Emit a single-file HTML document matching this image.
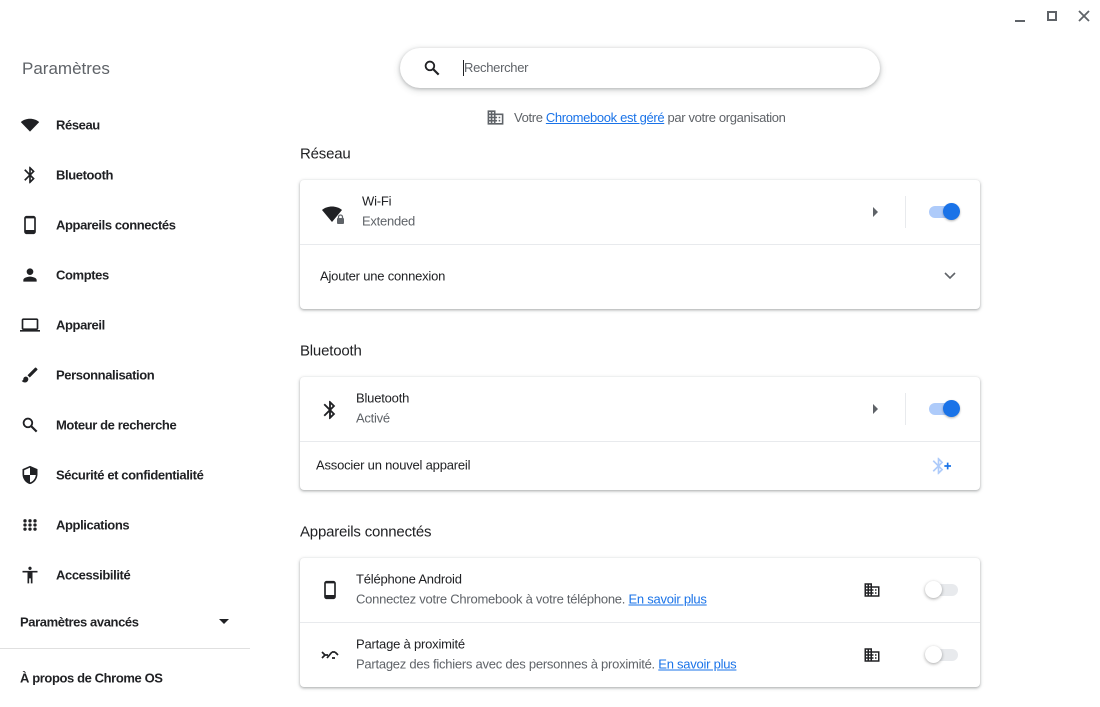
<!DOCTYPE html>
<html><head><meta charset="utf-8"><style>
*{margin:0;padding:0;box-sizing:border-box}
body{width:1100px;height:707px;background:#fff;font-family:"Liberation Sans",Arial,sans-serif;color:#202124;position:relative;overflow:hidden}
.a{position:absolute}
.nav{position:absolute;left:56px;font-size:13px;font-weight:bold;color:#202124;transform:translateY(-50%);letter-spacing:-0.4px}
.ic{position:absolute;width:20px;height:20px;transform:translate(-50%,-50%)}
.card{position:absolute;left:300px;width:680px;background:#fff;border-radius:4px;box-shadow:0 1px 2px rgba(60,64,67,.3),0 1px 3px 1px rgba(60,64,67,.15)}
.h{position:absolute;left:300px;font-size:15px;color:#202124;transform:translateY(-50%);letter-spacing:-0.2px}
.t{position:absolute;font-size:13px;color:#202124;transform:translateY(-50%);letter-spacing:-0.2px}
.s{position:absolute;font-size:13px;color:#5f6368;transform:translateY(-50%);letter-spacing:-0.25px}
.sep{position:absolute;left:0;right:0;height:1px;background:#e8eaed}
a{color:#1a73e8;text-decoration:underline}
.ton .tr{position:absolute;width:30px;height:12px;border-radius:6px;background:#aecbfa}
.ton .kn{position:absolute;width:17px;height:17px;border-radius:50%;background:#1a73e8;box-shadow:0 1px 2px rgba(0,0,0,.3)}
.toff .tr{position:absolute;width:30px;height:12px;border-radius:6px;background:#e8eaed}
.toff .kn{position:absolute;width:17px;height:17px;border-radius:50%;background:#fff;box-shadow:0 1px 3px rgba(0,0,0,.35)}
</style></head><body>

<div class="a" style="left:1015px;top:20px;width:10px;height:2px;background:#5f6368"></div>
<div class="a" style="left:1047px;top:11px;width:10px;height:10px;border:2px solid #5f6368"></div>
<svg class="a" style="left:1078px;top:10px" width="12" height="12" viewBox="0 0 12 12"><path d="M1 1L11 11M11 1L1 11" stroke="#5f6368" stroke-width="1.8"/></svg>

<div class="a" style="left:22px;top:59px;font-size:17px;color:#5f6368">Paramètres</div>

<svg class="ic" style="left:30px;top:125px" viewBox="0 0 24 24"><path d="M12 20L1 8.5C4 5.8 7.8 4.5 12 4.5S20 5.8 23 8.5z" fill="#202124"/></svg>
<div class="nav" style="top:125px">Réseau</div>
<svg class="ic" style="left:30px;top:175px" viewBox="0 0 24 24"><path d="M17.7 7.7L12 2h-1v7.6L6.4 5 5 6.4 10.6 12 5 17.6 6.4 19l4.6-4.6V22h1l5.7-5.7-4.3-4.3 4.3-4.3zM13 5.8l1.9 1.9L13 9.6V5.8zm1.9 10.5L13 18.2v-3.8l1.9 1.9z" fill="#202124"/></svg>
<div class="nav" style="top:175px">Bluetooth</div>
<svg class="ic" style="left:30px;top:225px" viewBox="0 0 24 24"><path d="M16 1H8C6.3 1 5 2.3 5 4v16c0 1.7 1.3 3 3 3h8c1.7 0 3-1.300 3-3V4c0-1.7-1.3-3-3-3zm1 17H7V4h10v14z" fill="#202124"/></svg>
<div class="nav" style="top:225px">Appareils connectés</div>
<svg class="ic" style="left:30px;top:275px" viewBox="0 0 24 24"><path d="M12 12c2.2 0 4-1.8 4-4s-1.8-4-4-4-4 1.8-4 4 1.8 4 4 4zm0 2c-2.7 0-8 1.3-8 4v2h16v-2c0-2.7-5.3-4-8-4z" fill="#202124"/></svg>
<div class="nav" style="top:275px">Comptes</div>
<svg class="ic" style="left:30px;top:325px" viewBox="0 0 24 24"><path d="M20 18c1.1 0 2-.9 2-2V6c0-1.1-.9-2-2-2H4c-1.1 0-2 .9-2 2v10c0 1.1.9 2 2 2H0v2h24v-2h-4zM4 6h16v10H4V6z" fill="#202124"/></svg>
<div class="nav" style="top:325px">Appareil</div>
<svg class="ic" style="left:30px;top:375px" viewBox="0 0 24 24"><path d="M7 14c-1.7 0-3 1.3-3 3 0 1.3-1.2 2-2 2 .9 1.2 2.5 2 4 2 2.2 0 4-1.8 4-4 0-1.7-1.3-3-3-3zm13.7-9.4l-1.3-1.3a1 1 0 00-1.4 0L9 12.3 11.7 15l9-9a1 1 0 000-1.4z" fill="#202124"/></svg>
<div class="nav" style="top:375px">Personnalisation</div>
<svg class="ic" style="left:30px;top:425px" viewBox="0 0 24 24"><circle cx="9.5" cy="9.5" r="5.2" fill="none" stroke="#202124" stroke-width="2.2"/><path d="M13.5 13.5L20 20" stroke="#202124" stroke-width="2.6"/></svg>
<div class="nav" style="top:425px">Moteur de recherche</div>
<svg class="ic" style="left:30px;top:475px" viewBox="0 0 24 24"><path d="M12 1L3 5v6c0 5.5 3.8 10.7 9 12 5.2-1.3 9-6.5 9-12V5l-9-4zm0 11h7c-.5 4.1-3.3 7.8-7 8.9V12H5V6.3l7-3.1V12z" fill="#202124"/></svg>
<div class="nav" style="top:475px">Sécurité et confidentialité</div>
<svg class="ic" style="left:30px;top:525px" viewBox="0 0 24 24"><g fill="#202124"><circle cx="6" cy="7" r="2"/><circle cx="12" cy="7" r="2"/><circle cx="18" cy="7" r="2"/><circle cx="6" cy="12" r="2"/><circle cx="12" cy="12" r="2"/><circle cx="18" cy="12" r="2"/><circle cx="6" cy="17" r="2"/><circle cx="12" cy="17" r="2"/><circle cx="18" cy="17" r="2"/></g></svg>
<div class="nav" style="top:525px">Applications</div>
<svg class="ic" style="left:30px;top:575px" viewBox="0 0 24 24"><path d="M12 2c1.1 0 2 .9 2 2s-.9 2-2 2-2-.9-2-2 .9-2 2-2zm9 7h-6v13h-2v-6h-2v6H9V9H3V7h18v2z" fill="#202124"/></svg>
<div class="nav" style="top:575px">Accessibilité</div>

<div class="nav" style="left:20px;top:622px">Paramètres avancés</div>
<svg class="a" style="left:219px;top:619px" width="10" height="6" viewBox="0 0 10 6"><path d="M0 0h10L5 5z" fill="#202124"/></svg>
<div class="a" style="left:0;top:648px;width:250px;height:1px;background:#e0e0e0"></div>
<div class="nav" style="left:20px;top:678px">À propos de Chrome OS</div>

<div class="a" style="left:400px;top:48px;width:480px;height:40px;border-radius:20px;background:#fff;box-shadow:0 1px 3px rgba(60,64,67,.3),0 2px 6px 2px rgba(60,64,67,.12)"></div>
<svg class="a" style="left:422px;top:58px" width="20" height="20" viewBox="0 0 24 24"><circle cx="9.5" cy="9.5" r="5.2" fill="none" stroke="#202124" stroke-width="2.2"/><path d="M13.5 13.5L20 20" stroke="#202124" stroke-width="2.6"/></svg>
<div class="a" style="left:463px;top:60px;width:1px;height:16px;background:#202124"></div>
<div class="a" style="left:464px;top:60px;font-size:13px;color:#5f6368;letter-spacing:-0.3px">Rechercher</div>

<svg class="a" style="left:486px;top:108px" width="19" height="19" viewBox="0 0 24 24"><path d="M12 7V3H2v18h20V7H12zM6 19H4v-2h2v2zm0-4H4v-2h2v2zm0-4H4V9h2v2zm0-4H4V5h2v2zm4 12H8v-2h2v2zm0-4H8v-2h2v2zm0-4H8V9h2v2zm0-4H8V5h2v2zm10 12h-8v-2h2v-2h-2v-2h2v-2h-2V9h8v10zm-2-8h-2v2h2v-2zm0 4h-2v2h2v-2z" fill="#5f6368"/></svg>
<div class="a" style="left:514px;top:110px;font-size:13px;color:#5f6368;letter-spacing:-0.35px">Votre <a>Chromebook est géré</a> par votre organisation</div>

<div class="h" style="top:154px">Réseau</div>
<div class="card" style="top:180px;height:129px">
  <svg class="a" style="left:21px;top:23px" width="24" height="22" viewBox="0 0 24 22"><path d="M11 19L1 7C4 4.5 7.5 3.5 11 3.5S18 4.5 21 7z" fill="#202124"/><rect x="16" y="15" width="7" height="6" rx="1" fill="#5f6368"/><path d="M17.5 15.5v-1.5a2 2 0 014 0v1.5" stroke="#5f6368" fill="none" stroke-width="1.3"/></svg>
  <div class="t" style="left:62px;top:21px">Wi-Fi</div>
  <div class="s" style="left:62px;top:41px">Extended</div>
  <svg class="a" style="left:573px;top:27px" width="5" height="10" viewBox="0 0 5 10"><path d="M0 0l5 5-5 5z" fill="#5f6368"/></svg>
  <div class="a" style="left:605px;top:16px;width:1px;height:32px;background:#e8eaed"></div>
  <div class="ton"><div class="tr" style="left:629px;top:26px"></div><div class="kn" style="left:643px;top:23px"></div></div>
  <div class="sep" style="top:64px"></div>
  <div class="t" style="left:20px;top:96px">Ajouter une connexion</div>
  <svg class="a" style="left:644px;top:92px" width="12" height="8" viewBox="0 0 12 8"><path d="M1 1l5 5 5-5" stroke="#5f6368" stroke-width="1.6" fill="none"/></svg>
</div>

<div class="h" style="top:351px">Bluetooth</div>
<div class="card" style="top:377px;height:113px">
  <svg class="a" style="left:19px;top:22px" width="22" height="22" viewBox="0 0 24 24"><path d="M17.7 7.7L12 2h-1v7.6L6.4 5 5 6.4 10.6 12 5 17.6 6.4 19l4.6-4.6V22h1l5.7-5.7-4.3-4.3 4.3-4.3zM13 5.8l1.9 1.9L13 9.6V5.8zm1.9 10.5L13 18.2v-3.8l1.9 1.9z" fill="#202124"/></svg>
  <div class="t" style="left:56px;top:21px">Bluetooth</div>
  <div class="s" style="left:56px;top:41px">Activé</div>
  <svg class="a" style="left:573px;top:27px" width="5" height="10" viewBox="0 0 5 10"><path d="M0 0l5 5-5 5z" fill="#5f6368"/></svg>
  <div class="a" style="left:605px;top:16px;width:1px;height:32px;background:#e8eaed"></div>
  <div class="ton"><div class="tr" style="left:629px;top:26px"></div><div class="kn" style="left:643px;top:23px"></div></div>
  <div class="sep" style="top:64px"></div>
  <div class="t" style="left:16px;top:88px">Associer un nouvel appareil</div>
  <svg class="a" style="left:630px;top:79px" width="22" height="20" viewBox="0 0 24 24"><path d="M14.7 7.7L9 2H8v7.6L3.4 5 2 6.4 7.6 12 2 17.6 3.4 19 8 14.4V22h1l5.7-5.7-4.3-4.3 4.3-4.3zM10 5.8l1.9 1.9L10 9.6V5.8zm1.9 10.5L10 18.2v-3.8l1.9 1.9z" fill="#aecbfa"/><path d="M16 11h3V8h2v3h3v2h-3v3h-2v-3h-3z" fill="#1a73e8"/></svg>
</div>

<div class="h" style="top:532px">Appareils connectés</div>
<div class="card" style="top:558px;height:129px">
  <svg class="a" style="left:20px;top:21px" width="20" height="22" viewBox="0 0 24 24"><path d="M16 1H8C6.3 1 5 2.3 5 4v16c0 1.7 1.3 3 3 3h8c1.7 0 3-1.3 3-3V4c0-1.7-1.3-3-3-3zm1 17H7V4h10v14z" fill="#202124"/></svg>
  <div class="t" style="left:56px;top:21px">Téléphone Android</div>
  <div class="s" style="left:56px;top:41px">Connectez votre Chromebook à votre téléphone. <a>En savoir plus</a></div>
  <svg class="a" style="left:563px;top:23px" width="18" height="18" viewBox="0 0 24 24"><path d="M12 7V3H2v18h20V7H12zM6 19H4v-2h2v2zm0-4H4v-2h2v2zm0-4H4V9h2v2zm0-4H4V5h2v2zm4 12H8v-2h2v2zm0-4H8v-2h2v2zm0-4H8V9h2v2zm0-4H8V5h2v2zm10 12h-8v-2h2v-2h-2v-2h2v-2h-2V9h8v10zm-2-8h-2v2h2v-2zm0 4h-2v2h2v-2z" fill="#202124"/></svg>
  <div class="toff"><div class="tr" style="left:628px;top:26px"></div><div class="kn" style="left:625px;top:23px"></div></div>
  <div class="sep" style="top:64px"></div>
  <svg class="a" style="left:20px;top:90px" width="20" height="14" viewBox="0 0 20 14"><path d="M2 4l3 3-3 3M5 7h3M7 10l5-6M12 4h3M15 4l3 3M12 10h3" stroke="#202124" stroke-width="1.7" fill="none"/></svg>
  <div class="t" style="left:56px;top:86px">Partage à proximité</div>
  <div class="s" style="left:56px;top:106px">Partagez des fichiers avec des personnes à proximité. <a>En savoir plus</a></div>
  <svg class="a" style="left:563px;top:88px" width="18" height="18" viewBox="0 0 24 24"><path d="M12 7V3H2v18h20V7H12zM6 19H4v-2h2v2zm0-4H4v-2h2v2zm0-4H4V9h2v2zm0-4H4V5h2v2zm4 12H8v-2h2v2zm0-4H8v-2h2v2zm0-4H8V9h2v2zm0-4H8V5h2v2zm10 12h-8v-2h2v-2h-2v-2h2v-2h-2V9h8v10zm-2-8h-2v2h2v-2zm0 4h-2v2h2v-2z" fill="#202124"/></svg>
  <div class="toff"><div class="tr" style="left:628px;top:91px"></div><div class="kn" style="left:625px;top:88px"></div></div>
</div>

</body></html>
